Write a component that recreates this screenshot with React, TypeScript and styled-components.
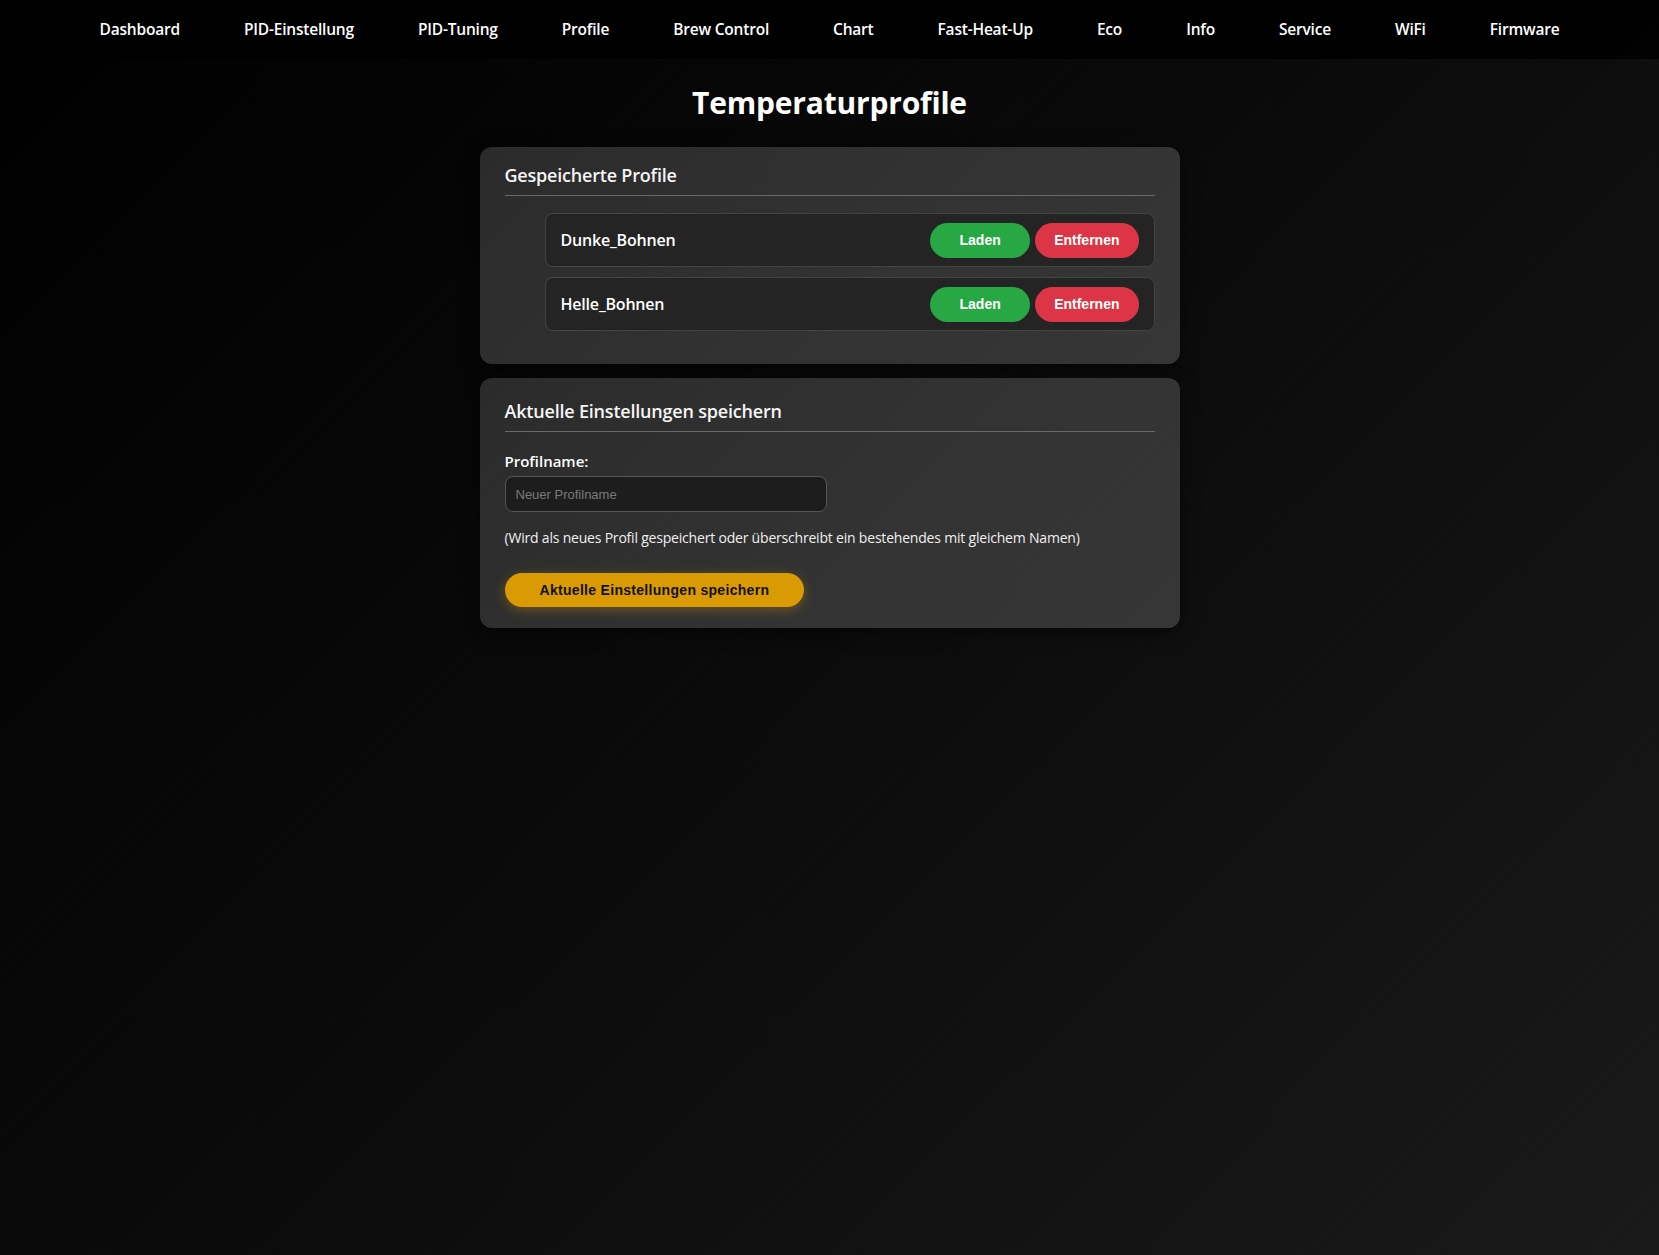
import React from "react";
import styled, { createGlobalStyle } from "styled-components";

const GlobalStyle = createGlobalStyle`
  html, body {
    margin: 0;
    padding: 0;
  }
  body {
    min-height: 1255px;
    background: linear-gradient(135deg, #000000 0%, #0b0b0b 50%, #1a1a1a 100%);
    color: #f2f2f2;
    font-family: "Open Sans", "Noto Sans", sans-serif;
  }
`;

const NavBar = styled.nav`
  height: 59px;
  box-sizing: border-box;
  padding-bottom: 2px;
  background: rgba(0, 0, 0, 0.85);
  display: flex;
  justify-content: center;
  align-items: center;
  gap: 64px;
`;

const NavLink = styled.a`
  color: #ffffff;
  font-size: 15.5px;
  font-weight: 600;
  text-decoration: none;
  letter-spacing: -0.2px;
  cursor: pointer;
`;

const Main = styled.main`
  width: 700px;
  margin: 0 auto;
  padding-bottom: 40px;
`;

const Title = styled.h1`
  margin: 22px 0 22px;
  text-align: center;
  font-size: 30px;
  font-weight: 700;
  line-height: 44px;
  color: #ffffff;
  letter-spacing: -0.2px;
`;

const Card = styled.section<{ $padTop: number }>`
  background: linear-gradient(135deg, #2b2b2b 0%, #333333 60%, #363636 100%);
  border-radius: 12px;
  padding: ${({ $padTop }) => $padTop}px 25px 21px;
  margin-bottom: 14px;
  box-shadow: 0 4px 18px rgba(0, 0, 0, 0.5);
`;

const CardTitle = styled.h2`
  margin: 0;
  padding-bottom: 7px;
  border-bottom: 1px solid #6a6a6a;
  font-size: 18px;
  font-weight: 600;
  line-height: 26px;
  color: #f5f5f5;
  letter-spacing: -0.2px;
`;

const ProfileList = styled.ul`
  list-style: none;
  margin: 17px 0 12px;
  padding-left: 40px;
  display: flex;
  flex-direction: column;
  gap: 10px;
`;

const ProfileRow = styled.li`
  height: 54px;
  box-sizing: border-box;
  display: flex;
  align-items: center;
  justify-content: space-between;
  padding: 0 15px;
  background: #242424;
  border: 1px solid #444444;
  border-radius: 8px;
`;

const ProfileName = styled.span`
  font-size: 16px;
  font-weight: 600;
  color: #ffffff;
  letter-spacing: -0.2px;
`;

const Actions = styled.div`
  display: flex;
  gap: 5px;
`;

const PillButton = styled.button<{ $variant: "load" | "remove" }>`
  height: 35px;
  min-width: 100px;
  padding: 0 19px;
  border: none;
  border-radius: 18px;
  background: ${({ $variant }) => ($variant === "load" ? "#28a745" : "#dc3545")};
  color: #ffffff;
  font-family: "Liberation Sans", Arial, sans-serif;
  font-size: 14px;
  font-weight: 700;
  cursor: pointer;
`;

const Label = styled.label`
  display: block;
  margin: 19px 0 5px;
  font-size: 15px;
  font-weight: 600;
  color: #ffffff;
`;

const TextInput = styled.input`
  width: 322px;
  height: 36px;
  box-sizing: border-box;
  padding: 0 10px;
  background: #1d1d1d;
  border: 1px solid #555555;
  border-radius: 8px;
  color: #eeeeee;
  font-family: "Liberation Sans", Arial, sans-serif;
  font-size: 13px;
  outline: none;

  &::placeholder {
    color: #7a7a7a;
  }
`;

const Hint = styled.p`
  margin: 16px 0 26px;
  font-size: 14px;
  line-height: 19px;
  color: #f0f0f0;
  letter-spacing: -0.2px;
`;

const SaveButton = styled.button`
  height: 34px;
  padding: 0 35px;
  border: none;
  border-radius: 17px;
  background: #da9a03;
  color: #111111;
  font-family: "Liberation Sans", Arial, sans-serif;
  font-size: 14px;
  font-weight: 700;
  letter-spacing: 0.3px;
  box-shadow: 0 3px 12px rgba(218, 154, 3, 0.35);
  cursor: pointer;
`;

const navItems = [
  "Dashboard",
  "PID-Einstellung",
  "PID-Tuning",
  "Profile",
  "Brew Control",
  "Chart",
  "Fast-Heat-Up",
  "Eco",
  "Info",
  "Service",
  "WiFi",
  "Firmware",
];

const profiles = ["Dunke_Bohnen", "Helle_Bohnen"];

export default function App() {
  return (
    <>
      <GlobalStyle />
      <NavBar>
        {navItems.map((item) => (
          <NavLink key={item}>{item}</NavLink>
        ))}
      </NavBar>
      <Main>
        <Title>Temperaturprofile</Title>

        <Card $padTop={15}>
          <CardTitle>Gespeicherte Profile</CardTitle>
          <ProfileList>
            {profiles.map((name) => (
              <ProfileRow key={name}>
                <ProfileName>{name}</ProfileName>
                <Actions>
                  <PillButton $variant="load">Laden</PillButton>
                  <PillButton $variant="remove">Entfernen</PillButton>
                </Actions>
              </ProfileRow>
            ))}
          </ProfileList>
        </Card>

        <Card $padTop={20}>
          <CardTitle>Aktuelle Einstellungen speichern</CardTitle>
          <Label htmlFor="profile-name">Profilname:</Label>
          <TextInput id="profile-name" placeholder="Neuer Profilname" />
          <Hint>
            (Wird als neues Profil gespeichert oder überschreibt ein bestehendes mit gleichem Namen)
          </Hint>
          <SaveButton>Aktuelle Einstellungen speichern</SaveButton>
        </Card>
      </Main>
    </>
  );
}
